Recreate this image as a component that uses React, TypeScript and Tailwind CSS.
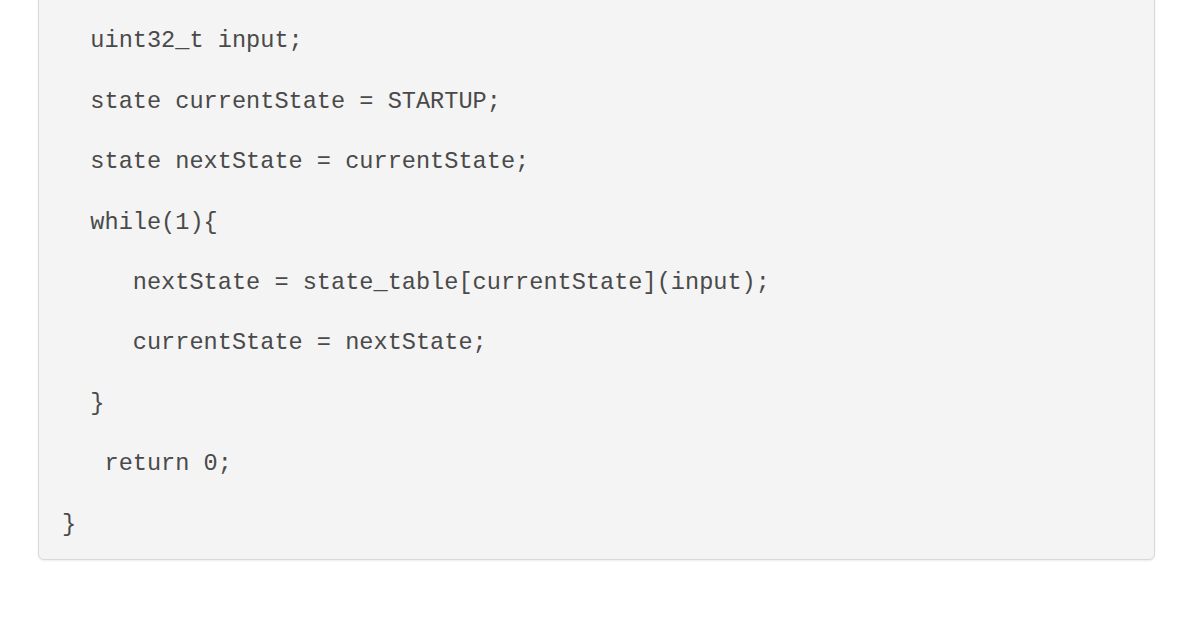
import React from 'react';

const lines: Array<{ indent: number; text: string }> = [
  { indent: 0, text: 'int main(void){' },
  { indent: 2, text: 'uint32_t input;' },
  { indent: 2, text: 'state currentState = STARTUP;' },
  { indent: 2, text: 'state nextState = currentState;' },
  { indent: 2, text: 'while(1){' },
  { indent: 5, text: 'nextState = state_table[currentState](input);' },
  { indent: 5, text: 'currentState = nextState;' },
  { indent: 2, text: '}' },
  { indent: 3, text: 'return 0;' },
  { indent: 0, text: '}' },
];

export default function App() {
  return (
    <div className="w-[1196px] h-[628px] overflow-hidden bg-white">
      <div className="ml-[38px] mt-[-50px] w-[1117px] rounded-[6px] border border-[#d9d9d9] bg-[#f4f4f4] pl-[23px] pb-[4px] shadow-[0_1px_2px_rgba(0,0,0,0.08)]">
        <pre className="m-0 font-['Liberation_Mono','DejaVu_Sans_Mono',monospace] text-[23.6px] leading-[60.4px] text-[#4a4a4a]">
          {lines.map((l, i) => (
            <div key={i}>{' '.repeat(l.indent) + l.text}</div>
          ))}
        </pre>
      </div>
    </div>
  );
}
